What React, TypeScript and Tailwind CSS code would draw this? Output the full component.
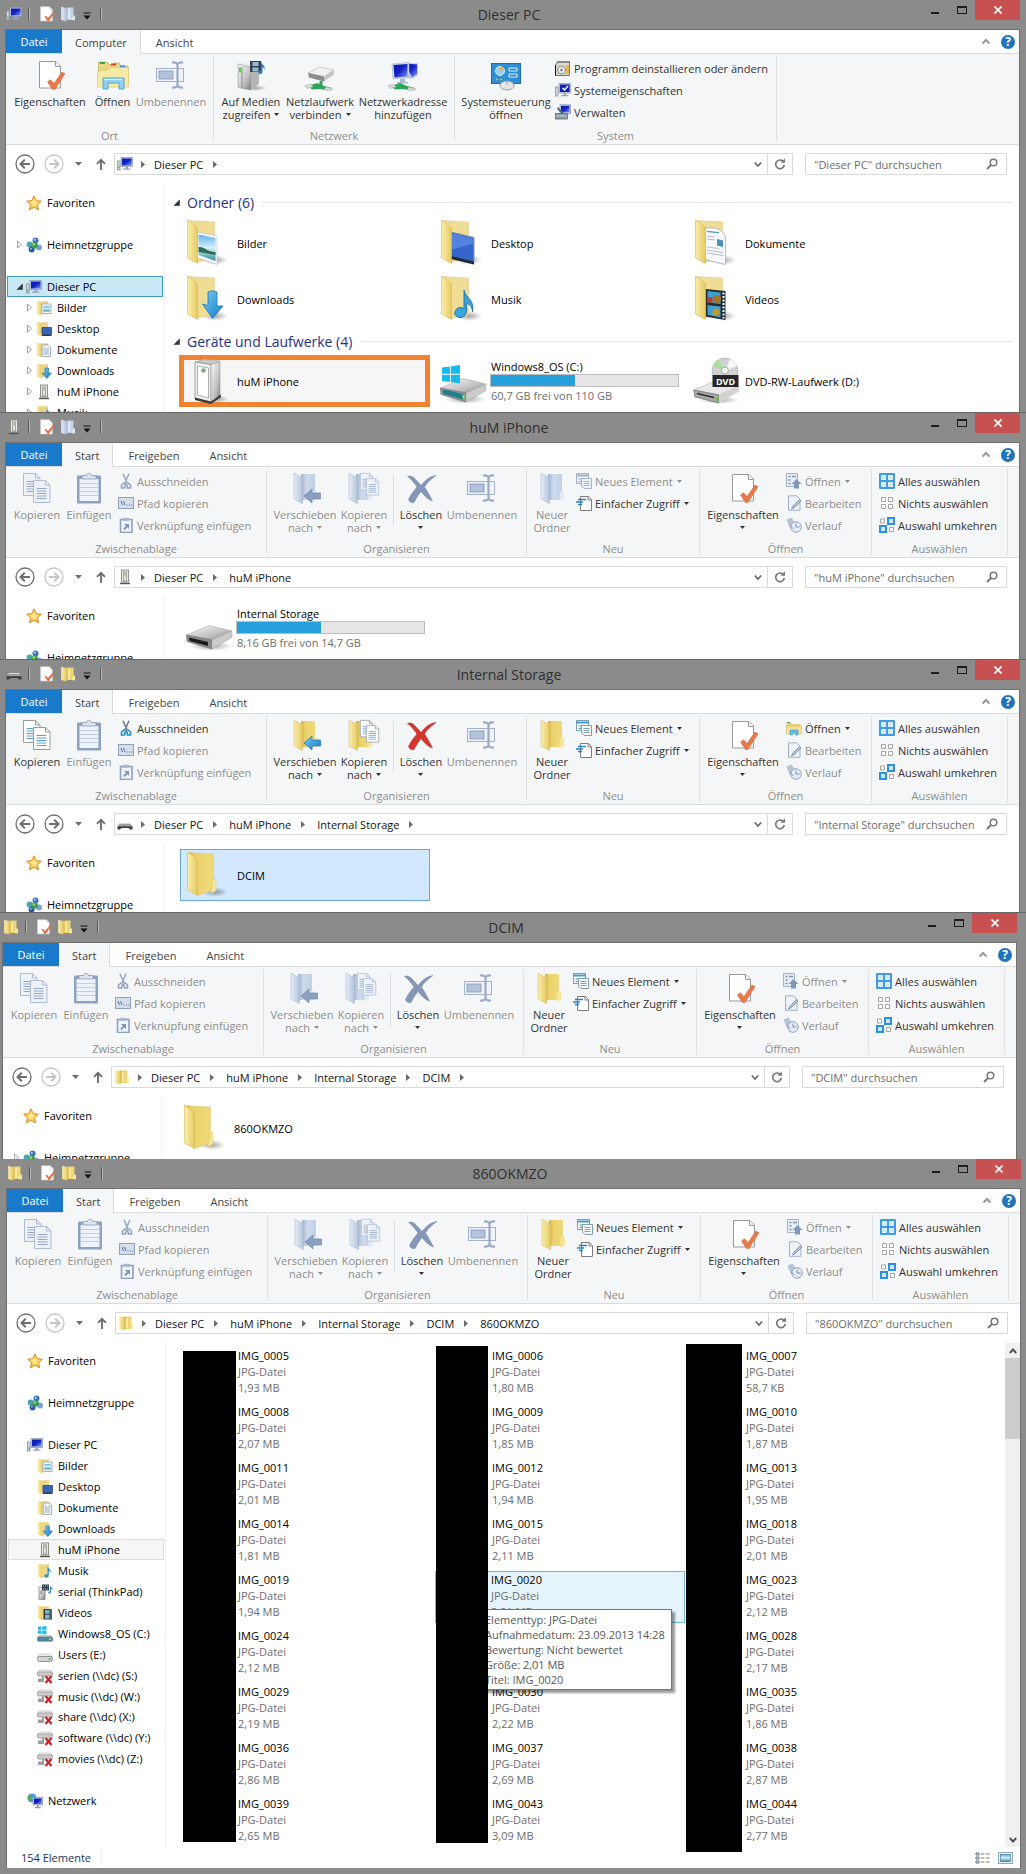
import React from "react";

type IconProps = { on?: boolean };

/* ---------- shared gradients ---------- */

function Gradients() {
  return (
    <svg className="absolute h-0 w-0" aria-hidden="true">
      <defs>
        <linearGradient id="flap" x1="0" x2="1" y1="0" y2="0">
          <stop offset="0" stopColor="#fbefae" />
          <stop offset="1" stopColor="#e6c961" />
        </linearGradient>
        <linearGradient id="panel" x1="0" x2="1" y1="0" y2="0">
          <stop offset="0" stopColor="#d3b142" />
          <stop offset="0.3" stopColor="#ecd26d" />
          <stop offset="1" stopColor="#efd978" />
        </linearGradient>
        <linearGradient id="flapBlue" x1="0" x2="1" y1="0" y2="0">
          <stop offset="0" stopColor="#e6edf7" />
          <stop offset="1" stopColor="#b4c3da" />
        </linearGradient>
        <linearGradient id="panelBlue" x1="0" x2="1" y1="0" y2="0">
          <stop offset="0" stopColor="#9fb2cf" />
          <stop offset="0.4" stopColor="#cfdbec" />
          <stop offset="1" stopColor="#c0cfe4" />
        </linearGradient>
        <linearGradient id="screen" x1="0" x2="1" y1="0" y2="1">
          <stop offset="0" stopColor="#0b1aa8" />
          <stop offset="0.5" stopColor="#1322c4" />
          <stop offset="1" stopColor="#7f9af2" />
        </linearGradient>
        <linearGradient id="metal" x1="0" x2="1" y1="0" y2="1">
          <stop offset="0" stopColor="#fafafa" />
          <stop offset="0.6" stopColor="#c2c2c2" />
          <stop offset="1" stopColor="#7d7d7d" />
        </linearGradient>
        <linearGradient id="sky" x1="0" x2="0" y1="0" y2="1">
          <stop offset="0" stopColor="#5fb2e8" />
          <stop offset="0.5" stopColor="#d8effa" />
          <stop offset="1" stopColor="#2c8f94" />
        </linearGradient>
        <linearGradient id="arrow" x1="0" x2="1" y1="0" y2="1">
          <stop offset="0" stopColor="#7cc8f2" />
          <stop offset="1" stopColor="#0f7fc9" />
        </linearGradient>
        <radialGradient id="starFill">
          <stop offset="0" stopColor="#fff3a0" />
          <stop offset="1" stopColor="#f7b32b" />
        </radialGradient>
        <radialGradient id="shadow">
          <stop offset="0" stopColor="#000" stopOpacity="0.35" />
          <stop offset="1" stopColor="#000" stopOpacity="0" />
        </radialGradient>
      </defs>
    </svg>
  );
}

/* ---------- 16px icons ---------- */

function Svg16({ children }: { children: React.ReactNode }) {
  return (
    <svg viewBox="0 0 16 16" className="h-4 w-4 shrink-0" aria-hidden="true">
      {children}
    </svg>
  );
}

function PcIcon() {
  return (
    <Svg16>
      <rect x="0.5" y="5" width="2.6" height="9" fill="#d7dbe0" stroke="#8a919b" strokeWidth="0.8" />
      <rect x="1.2" y="10.5" width="1.4" height="1.8" fill="#62b04b" />
      <rect x="4" y="1.5" width="11.6" height="9" fill="#c9d2e6" stroke="#8793ad" strokeWidth="0.7" />
      <rect x="5" y="2.5" width="9.6" height="7" fill="url(#screen)" />
      <path d="M8.500 10.500h2.600v2h2.400v1.200H6v-1.200h2.500z" fill="#9aa4b8" />
    </Svg16>
  );
}

function PhoneIcon() {
  return (
    <Svg16>
      <rect x="4.500" y="1" width="7" height="12" fill="#e9eae4" stroke="#8d8f89" />
      <rect x="6.800" y="3" width="2.400" height="9" fill="#fff" stroke="#77796f" strokeWidth="0.800" />
      <rect x="7.500" y="4.200" width="1" height="2.400" fill="#78a567" />
      <path d="M3 14.500h10" stroke="#555" strokeWidth="1.400" />
    </Svg16>
  );
}

function FlatDriveIcon() {
  return (
    <Svg16>
      <path d="M3 7h10l2.500 3.500H.5z" fill="#9e9e9e" />
      <path d="M.5 10.300h15v3.200H13l-1.500-1.400h-7L3 13.500H.5z" fill="#3c3c3c" />
      <path d="M3 7h10l.8 1H2.200z" fill="#d8d8d8" />
    </Svg16>
  );
}

function FolderIcon({ on = true }: IconProps) {
  return (
    <Svg16>
      <path d="M6 1.500h7.500V14H6z" fill={on ? "url(#panel)" : "url(#panelBlue)"} />
      <path d="M13.500 9.500h1.500v4.800h-3V12z" fill={on ? "#f7e79c" : "#dfe8f4"} />
      <path d="M1.200.8l5.300 1.400v13.300L1.200 14z" fill={on ? "url(#flap)" : "url(#flapBlue)"} />
      <path d="M9 3v10" stroke={on ? "#fff6c8" : "#eef3fa"} strokeWidth="1.200" />
    </Svg16>
  );
}

function FolderWith({ kind }: { kind: string }) {
  return (
    <Svg16>
      <path d="M5.500 1.200H12V14H5.500z" fill="#ecd58a" />
      <path d="M.8.600l4.900 1.200v13.400L.8 13.800z" fill="url(#flap)" />
      {kind === "pic" && (
        <g>
          <rect x="6" y="4" width="9" height="9.500" fill="#fff" stroke="#8fa1ad" strokeWidth="0.800" />
          <rect x="7.200" y="6" width="6.600" height="5.500" fill="url(#sky)" />
        </g>
      )}
      {kind === "desk" && (
        <g>
          <path d="M6 6.500h9.500v7H6z" fill="#3466b8" stroke="#2b4679" strokeWidth="0.800" />
          <path d="M6 13.800h9.500v1.200H6z" fill="#27384f" />
        </g>
      )}
      {kind === "doc" && (
        <g>
          <path d="M6.200 3h6.300l2 2v9.500H6.200z" fill="#fff" stroke="#8d99a8" strokeWidth="0.800" />
          <path d="M7.500 6h2.500M7.500 8h5.500M7.500 10h5.500M7.500 12h5.500M11 6h2" stroke="#7c98bb" strokeWidth="0.900" />
        </g>
      )}
      {kind === "down" && <path d="M9 5h3.500v5H15.500l-4.700 5.500L6 10h3z" fill="url(#arrow)" stroke="#1a6fa8" strokeWidth="0.600" />}
      {kind === "music" && (
        <path d="M10.500 3c.3 2.500 4 3 3.200 7.500-.4-2-1.300-2.600-2-2.700v4.700c0 3-5 2.800-4.300.3.400-1.500 2-1.800 3.100-1.300z" fill="#2f93cc" />
      )}
      {kind === "video" && (
        <g>
          <rect x="6.500" y="4" width="8.500" height="10.500" fill="#2f3a42" />
          <rect x="8" y="5" width="4.500" height="3.800" fill="#6fb4dc" />
          <rect x="8" y="9.800" width="4.500" height="3.800" fill="#8fb7c6" />
          <path d="M14 4.500v10" stroke="#dfe4e8" strokeWidth="0.900" strokeDasharray="1 1" />
        </g>
      )}
    </Svg16>
  );
}

function StarIcon() {
  return (
    <Svg16>
      <path d="M8 .8l2.200 4.800 5.200.6-3.900 3.500 1.100 5.200L8 12.300l-4.600 2.600 1.100-5.200L.6 6.200l5.200-.6z" fill="url(#starFill)" stroke="#d98a24" strokeWidth="0.900" />
    </Svg16>
  );
}

function HomegroupIcon() {
  return (
    <Svg16>
      <circle cx="9.500" cy="3.600" r="3" fill="#3a72c4" />
      <circle cx="3.600" cy="7.500" r="3" fill="#48a7b5" />
      <circle cx="13" cy="10.500" r="3" fill="#7ea1d8" />
      <circle cx="5.600" cy="12.600" r="3" fill="#2b57b0" />
      <circle cx="8.600" cy="8.400" r="3.200" fill="#3f9b45" />
      <circle cx="7.800" cy="7.400" r="1.200" fill="#a5dd9a" />
      <circle cx="8.800" cy="2.700" r="1" fill="#c5daf5" />
      <circle cx="4.900" cy="11.700" r="0.900" fill="#a9c3f0" />
    </Svg16>
  );
}

function NetworkIcon() {
  return (
    <Svg16>
      <circle cx="5" cy="5" r="4.600" fill="#4f9bd6" />
      <path d="M2 2.500c2-2 4 0 3 1.500S3 6 4 9C1 8 0 4 2 2.500z" fill="#58a94a" />
      <rect x="6" y="4.500" width="9.600" height="7.500" fill="#c9d2e6" stroke="#8793ad" strokeWidth="0.700" />
      <rect x="7" y="5.500" width="7.600" height="5.500" fill="url(#screen)" />
      <path d="M9.800 12h2v2h2v1.200h-6V14h2z" fill="#8f9ab0" />
    </Svg16>
  );
}

function MediaServerIcon() {
  return (
    <Svg16>
      <rect x="2" y="3" width="6" height="12.500" fill="url(#metal)" stroke="#7a7a7a" strokeWidth="0.700" />
      <rect x="3.500" y="7" width="1.400" height="3" fill="#62b04b" />
      <rect x="5" y="0.500" width="7" height="6" fill="#30424f" />
      <path d="M6 2h5M6 5h5" stroke="#9ad0ee" strokeDasharray="1 1" />
      <path d="M13 1c0 2 3 2 2.500 5.500-.5-1.300-1-1.600-1.500-1.600V8c0 2-3.300 1.800-2.700.2.300-.8 1-1 1.700-.7z" fill="#2f93cc" />
    </Svg16>
  );
}

function SystemDriveIcon() {
  return (
    <Svg16>
      <path d="M1 .8l3.500-.4v3.400H1zM5.200.4L9.500 0v3.800H5.200zM1 4.500h3.500V8L1 7.500zM5.200 4.500h4.300v4L5.200 8z" fill="#1bbdf0" />
      <path d="M2.500 9h11l2 2H.5z" fill="#c4c9cd" />
      <rect x="0.500" y="11" width="15" height="4.200" rx="1" fill="#4c8aa0" stroke="#5e6e75" strokeWidth="0.600" />
      <rect x="12" y="12.400" width="2" height="1.500" fill="#a5e37b" />
    </Svg16>
  );
}

function DriveIcon() {
  return (
    <Svg16>
      <path d="M3 7h10l2.500 3H.5z" fill="#ececec" stroke="#a5a5a5" strokeWidth="0.500" />
      <rect x="0.500" y="9.500" width="15" height="5" rx="2" fill="#d5d5d5" stroke="#7d7d7d" strokeWidth="0.800" />
      <rect x="11.800" y="11.200" width="2" height="1.800" fill="#57a83e" />
    </Svg16>
  );
}

function LostDriveIcon() {
  return (
    <Svg16>
      <path d="M2.500 2h11l2 2.500H.5z" fill="#ededed" stroke="#aaa" strokeWidth="0.500" />
      <rect x="0.500" y="4" width="15" height="4" rx="1.200" fill="#cdcdcd" stroke="#8b8b8b" strokeWidth="0.700" />
      <path d="M6 8v3.500H1M1 13h6" stroke="#9c9c9c" strokeWidth="2" fill="none" />
      <path d="M8.500 8l6 7M14.500 8l-6 7" stroke="#cf1f27" strokeWidth="2.200" />
    </Svg16>
  );
}

function DocCheckIcon() {
  return (
    <Svg16>
      <path d="M1.500.7h8.800l3 3V15H1.500z" fill="#fff" stroke="#c9c9c9" strokeWidth="0.700" />
      <path d="M10.300.7v3h3" fill="#e3e3e3" />
      <path d="M5.500 10.500l1.600-.8 1.800 2.400 4.800-5.600 1.500.7-6 8.500z" fill="#e2704a" />
    </Svg16>
  );
}

/* ---------- ribbon icons ---------- */

function Svg32({ children }: { children: React.ReactNode }) {
  return (
    <svg viewBox="0 0 32 32" className="h-8 w-8 shrink-0" aria-hidden="true">
      {children}
    </svg>
  );
}

function PropertiesIcon() {
  return (
    <Svg32>
      <path d="M5.500 2.500H22l4.500 4.500v22h-21z" fill="#fff" stroke="#9a9a9a" />
      <path d="M21.500 2.500V7.500h5" fill="#f0f0f0" stroke="#9a9a9a" />
      <path d="M13.500 23l3-2.300 3.500 3.800 8-11.500 3 1.800L21 30.500h-2.500z" fill="#e8794b" stroke="#cf5f33" strokeWidth="0.500" />
    </Svg32>
  );
}

function OpenIcon() {
  return (
    <Svg32>
      <path d="M1.500 3h9l1.500 2.500h4L17 4h5l1.500 3H31v20H1.500z" fill="#ecd683" stroke="#c9ae55" strokeWidth="0.700" />
      <rect x="3" y="3" width="5" height="2" fill="#3fa34b" />
      <rect x="14" y="4.500" width="5" height="2" fill="#d6452c" />
      <rect x="23" y="6.500" width="5" height="2" fill="#3c8fd0" />
      <path d="M.5 12l10-1 2-2.500H31.500V28H.5z" fill="#f7e9a6" stroke="#d9c06b" strokeWidth="0.600" />
      <path d="M6 19h21v11h-5v-6H11v6H6z" fill="#8fd0ee" stroke="#4ba3cf" strokeWidth="0.900" />
      <path d="M7.500 20.500h18" stroke="#d9f2fd" strokeWidth="1.200" />
    </Svg32>
  );
}

function RenameIcon() {
  return (
    <Svg32>
      <rect x="1.500" y="9.500" width="27" height="13" fill="#f0f3f9" stroke="#a3b1cb" />
      <rect x="4" y="12" width="14" height="8" fill="#b4c2da" stroke="#8296b8" strokeWidth="0.800" />
      <path d="M17 3.500c2.500-.5 4 0 5.500 1.500 1.500-1.500 3-2 5.500-1.500M17 28.500c2.500.5 4 0 5.500-1.500 1.500 1.500 3 2 5.500 1.500M22.500 4.500v23" stroke="#9aaac6" strokeWidth="2.200" fill="none" />
    </Svg32>
  );
}

function MediaIcon() {
  return (
    <Svg32>
      <ellipse cx="20" cy="29" rx="12" ry="3" fill="url(#shadow)" />
      <path d="M3 5L11 2l13 2-8 4z" fill="#efefef" />
      <path d="M3 5l13 3v23L3 28.500z" fill="url(#metal)" stroke="#8a8a8a" strokeWidth="0.500" />
      <path d="M16 8l8-4v21l-8 6z" fill="#b4b4b4" />
      <path d="M7 8v21" stroke="#8f8f8f" />
      <rect x="4" y="8.500" width="2" height="5" fill="#56c246" />
      <rect x="15" y="2" width="11" height="11" fill="#34444f" />
      <rect x="17.500" y="3" width="6" height="4" fill="#8fbcd6" />
      <rect x="17.500" y="8.500" width="6" height="4" fill="#8fbcd6" />
      <path d="M26 2c.5 4 4.500 3.500 3.500 9-.5-2-1.200-2.500-2-2.700V13c0 3-5 2.600-4 .2.500-1.200 1.500-1.400 2.500-1z" fill="#2488c8" />
    </Svg32>
  );
}

function Cable() {
  return (
    <g>
      <path d="M4 27l9-3 7 3 8 2-4 2.500-8-1.500-8 .5z" fill="#2da558" />
      <path d="M1 26.500l6-1.500 2 3-6 1.500zM22 28l7 2-3 2-6-1.500z" fill="#d9d9d9" stroke="#999" strokeWidth="0.400" />
    </g>
  );
}

function NetDriveIcon() {
  return (
    <Svg32>
      <path d="M4 14l12-6 14 3-10 6.500z" fill="#f1f1f1" stroke="#a5a5a5" strokeWidth="0.500" />
      <path d="M4 14l16 3.500v5L5 18.500z" fill="#8b8b8b" />
      <path d="M20 17.500L30 11v4.500l-10 7z" fill="#c4c4c4" />
      <path d="M17 22v5" stroke="#2da558" strokeWidth="3" />
      <Cable />
    </Svg32>
  );
}

function NetAddressIcon() {
  return (
    <Svg32>
      <path d="M17 3.500l14 1V16l-6 4-8-2z" fill="#bcc7e3" />
      <path d="M18 4.500l12 1V15l-5 3z" fill="url(#screen)" />
      <path d="M5 5l17-1.500v15L6 20z" fill="#d3dcf0" stroke="#9aa7c8" strokeWidth="0.500" />
      <path d="M6.500 6L20.500 5v12.500l-13 1z" fill="url(#screen)" />
      <path d="M13 19.500h5V23h3v1.500H10V23h3z" fill="#b0b8cc" />
      <Cable />
    </Svg32>
  );
}

function ControlPanelIcon() {
  return (
    <Svg32>
      <rect x="1.500" y="4.500" width="29" height="20" fill="#2f8fd3" stroke="#1d6ea9" />
      <circle cx="10" cy="12" r="4.500" fill="#8fd0f4" stroke="#d6effc" />
      <path d="M10 12V7.500A4.500 4.500 0 0 1 14 10z" fill="#f2a33c" />
      <path d="M19 9h8v3h-8zM19 15h8v3h-8z" fill="none" stroke="#d6effc" />
      <circle cx="7" cy="20.500" r="1" fill="#ffb347" />
      <circle cx="11" cy="20.500" r="1" fill="#ffb347" />
      <ellipse cx="17" cy="26.500" rx="7" ry="4.500" fill="#e3e5e8" stroke="#9aa0a8" />
      <path d="M17 22.200v4" stroke="#9aa0a8" />
    </Svg32>
  );
}

function Sheet({ x, y, on }: { x: number; y: number; on?: boolean }) {
  return (
    <g transform={`translate(${x} ${y})`}>
      <path d="M.5.500h12l4.500 4.500v17.500H.5z" fill={on ? "#fff" : "#edf1f8"} stroke={on ? "#9b9b9b" : "#aebbd2"} />
      <path d="M12.500.500V5H17" fill="none" stroke={on ? "#9b9b9b" : "#aebbd2"} />
      <path d="M3.500 8.500h10M3.500 11h10M3.500 13.500h10M3.500 16h10M3.500 18.500h10" stroke={on ? "#5b9fc9" : "#96a7c4"} />
    </g>
  );
}

function CopyIcon({ on }: IconProps) {
  return (
    <Svg32>
      <Sheet x={2} y={1} on={on} />
      <Sheet x={12} y={8} on={on} />
    </Svg32>
  );
}

function PasteIcon() {
  return (
    <Svg32>
      <rect x="4" y="3.500" width="24" height="28" rx="1" fill="#8ea1c0" />
      <rect x="6.500" y="7" width="19" height="22" fill="#eef2f9" />
      <path d="M7 11.500h18M7 15.500h18M7 19.500h18M7 23.500h18" stroke="#c2cfe2" />
      <path d="M9 3.500h4.500c0-3 5-3 5 0H23V7H9z" fill="#dde4f0" stroke="#8496b5" strokeWidth="0.700" />
    </Svg32>
  );
}

function BigFolder({ on }: IconProps) {
  return (
    <g>
      <path d="M12 2h14v26H12z" fill={on ? "url(#panel)" : "url(#panelBlue)"} />
      <path d="M24 19h4v8.500l-5 2z" fill={on ? "#f6e597" : "#e1e9f4"} />
      <path d="M5 1l8.500 5v25.500L5 27z" fill={on ? "url(#flap)" : "url(#flapBlue)"} stroke={on ? "#d3b75a" : "#a3b3cd"} strokeWidth="0.500" />
    </g>
  );
}

function MoveIcon({ on }: IconProps) {
  return (
    <Svg32>
      <BigFolder on={on} />
      <path d="M15 24l8-7v4h8.500v6H23v4z" fill={on ? "url(#arrow)" : "#8b9fbf"} stroke={on ? "#1a78b8" : "#7389ad"} strokeWidth="0.700" />
    </Svg32>
  );
}

function CopyToIcon({ on }: IconProps) {
  return (
    <Svg32>
      <g transform="translate(-4 0)">
        <BigFolder on={on} />
      </g>
      <g transform="translate(12 1) scale(.75)">
        <Sheet x={0} y={0} on={on} />
        <Sheet x={8} y={7} on={on} />
      </g>
    </Svg32>
  );
}

function DeleteIcon({ on }: IconProps) {
  return (
    <Svg32>
      <path
        d="M2.500 4.500c4-1.500 6 0 13.500 9C20 8.500 24 4.500 31 3.500c-5 3.500-9 7-11.500 11.500 3 4.500 5 8 8 14-4-1-8-5-11.500-9.500C13 23 11 27 9 30.500c-2 .8-5-.5-5.500-3C6 22 9 18.500 12 15 9 11 6.500 7 2.500 4.500z"
        fill={on ? "#d6362b" : "#8497b6"}
        stroke={on ? "#b3211c" : "#7488aa"}
        strokeWidth="0.500"
      />
    </Svg32>
  );
}

function NewFolderIcon({ on }: IconProps) {
  return (
    <Svg32>
      <BigFolder on={on} />
    </Svg32>
  );
}

function CutIcon({ on }: IconProps) {
  const c = on ? "#2489c9" : "#93a3be";
  return (
    <Svg16>
      <path d="M5 .8l4.200 9.500M11 .8L6.800 10.300" stroke={on ? "#6f7c88" : "#9dabc3"} strokeWidth="1.600" />
      <path d="M6.500 9.500l-3 2.500v3h3l1-4.500M9.500 9.500l3 2.500v3h-3l-1-4.500" fill="none" stroke={c} strokeWidth="1.600" />
    </Svg16>
  );
}

function PathIcon() {
  return (
    <Svg16>
      <rect x="0.500" y="2.500" width="15" height="11" fill="#d5deec" stroke="#8fa1c0" />
      <path d="M3 6l1.500 4M5.500 6L7 10M8.500 10h1M11 10h1M13.300 10h1" stroke="#5b7299" strokeWidth="1" />
    </Svg16>
  );
}

function ShortcutIcon() {
  return (
    <Svg16>
      <rect x="2.500" y="2.500" width="11.500" height="13" fill="#eef2f9" stroke="#8fa1c0" strokeWidth="1.600" />
      <path d="M5 .8h6v3H5z" fill="#a9b8d0" />
      <path d="M6 7h5v5l-1.700-1.700-2.600 2.700-1.400-1.400L8 9z" fill="#7f93b5" />
    </Svg16>
  );
}

function NewItemIcon({ on }: IconProps) {
  const c = on ? "#7f9db5" : "#a4b3cc";
  return (
    <Svg16>
      <rect x="0.500" y="0.500" width="12" height="10" fill={on ? "#fff" : "#e8edf6"} stroke={c} />
      <path d="M.5 2.500h12" stroke={on ? "#3f9ad0" : c} strokeWidth="2" />
      <path d="M2.500 6H6M2.500 8.500H6" stroke={on ? "#3f9ad0" : c} />
      <path d="M5.500 5.500h10v10H8l-2.500-2.500z" fill={on ? "#fdfdfd" : "#eef2f9"} stroke={c} />
      <path d="M7.500 8.500h6M7.500 10.500h6M7.500 12.500h6" stroke={c} />
    </Svg16>
  );
}

function EasyAccessIcon() {
  return (
    <Svg16>
      <path d="M4.500 1.500h8l3 3v11h-11z" fill="#fff" stroke="#7d7d7d" />
      <path d="M12 1.500V5h3.500" fill="none" stroke="#7d7d7d" />
      <path d="M2 4.500h8M0 7h7M2 9.500h4" stroke="#2b7fc0" strokeWidth="1.400" />
    </Svg16>
  );
}

function OpenSmallIcon({ on }: IconProps) {
  return on ? (
    <Svg16>
      <path d="M.5 2.500h5l1 1.500h8v4H.5z" fill="#e8cf74" />
      <path d="M1 2.500h3" stroke="#3fa34b" />
      <path d="M.5 6h15v8H.5z" fill="#f5e39a" stroke="#cfb45a" strokeWidth="0.600" />
      <path d="M4 10h8v5h-2.500v-2.500h-3V15H4z" fill="#6cc0e8" stroke="#3b97c8" strokeWidth="0.600" />
    </Svg16>
  ) : (
    <Svg16>
      <path d="M.5.500h11v13H.5z" fill="#e9eef6" stroke="#a3b2cb" />
      <path d="M2.500 3.500h2M2.500 7h2M2.500 10.500h2M6 3.500h4" stroke="#7f93b5" strokeWidth="1.600" />
      <path d="M10.500 6l5 5H13v4.500H8V11H5.500z" fill="#8297ba" />
    </Svg16>
  );
}

function EditIcon() {
  return (
    <Svg16>
      <path d="M2.500.800h8l3.500 3.500v11H2.500z" fill="#eef2f9" stroke="#9fafc9" />
      <path d="M13.500 4.500L7 11l-1.500 3 3-1.500L15 6z" fill="#b7c4da" stroke="#7389ad" strokeWidth="0.800" />
    </Svg16>
  );
}

function HistoryIcon() {
  return (
    <Svg16>
      <path d="M.5 2.500l5-2 4 6-6 4z" fill="#b5c2d8" />
      <circle cx="10" cy="10" r="5.300" fill="#e5ebf4" stroke="#92a4c2" />
      <path d="M10 6.500V10h3.500M4.500 9l3 3" stroke="#7f93b5" fill="none" />
    </Svg16>
  );
}

function SelectAllIcon() {
  return (
    <Svg16>
      <rect width="16" height="16" rx="1" fill="#3f9ce4" />
      <path d="M2.500 2.500h4v4h-4zM9.500 2.500h4v4h-4zM2.500 9.500h4v4h-4zM9.500 9.500h4v4h-4z" fill="#cbe8fd" stroke="#e8f5ff" />
    </Svg16>
  );
}

function SelectNoneIcon() {
  return (
    <Svg16>
      <path d="M2.500 2.500h4v4h-4zM9.500 2.500h4v4h-4zM2.500 9.500h4v4h-4zM9.500 9.500h4v4h-4z" fill="#fff" stroke="#a3a3a3" />
    </Svg16>
  );
}

function InvertIcon() {
  return (
    <Svg16>
      <path d="M1.500 2h4v4h-4zM10.500 10.500h4v4h-4z" fill="#fff" stroke="#a3a3a3" />
      <path d="M9 1h6v6H9zM1 9h6v6H1z" fill="#cbe8fd" stroke="#2e8fdc" strokeWidth="2" />
    </Svg16>
  );
}

function UninstallIcon() {
  return (
    <Svg16>
      <path d="M2.500 1.500h12v14h-14v-10z" fill="#d9d8cf" stroke="#76766f" />
      <path d="M2 2h13" stroke="#8c8c86" strokeWidth="2" />
      <path d="M11 5h3v9h-3z" fill="#e4b850" />
      <circle cx="6.500" cy="10" r="4" fill="#e8e8e8" stroke="#8a8a8a" />
      <circle cx="6.500" cy="10" r="1.200" fill="#777" />
      <path d="M.5 5v10.500" stroke="#111" />
    </Svg16>
  );
}

function SystemPropsIcon() {
  return (
    <Svg16>
      <rect x="0.500" y="5" width="2.500" height="9" fill="#d7dbe0" stroke="#8a919b" strokeWidth="0.800" />
      <rect x="4" y="1.500" width="11.600" height="9.500" fill="#c9d2e6" stroke="#8793ad" strokeWidth="0.700" />
      <rect x="5" y="2.500" width="9.600" height="7.500" fill="#1322b4" />
      <path d="M7.500 6l2 2L13 4" stroke="#fff" strokeWidth="1.400" fill="none" />
      <path d="M8.500 11h2.600v2h2.400v1.200H6V13h2.500z" fill="#9aa4b8" />
    </Svg16>
  );
}

function ManageIcon() {
  return (
    <Svg16>
      <rect x="5" y="0.800" width="10.500" height="9" fill="#c9d2e6" stroke="#8793ad" strokeWidth="0.700" />
      <rect x="6" y="1.800" width="8.500" height="6.500" fill="url(#screen)" />
      <path d="M3 3l6 6-2 1-5-5z" fill="#4f6a86" />
      <rect x="0.500" y="9.500" width="12" height="5.500" fill="#8d9aa5" stroke="#5f6b75" strokeWidth="0.800" />
      <path d="M1.500 12h10" stroke="#dfe5ea" strokeDasharray="2 1" />
    </Svg16>
  );
}

/* ---------- content tile icons ---------- */

function Svg48({ children }: { children: React.ReactNode }) {
  return (
    <svg viewBox="0 0 48 48" className="h-12 w-12 shrink-0" aria-hidden="true">
      {children}
    </svg>
  );
}

function TileFolder({ kind }: { kind?: string }) {
  return (
    <Svg48>
      <ellipse cx="30" cy="41" rx="13" ry="5" fill="url(#shadow)" />
      {kind ? (
        <path d="M3 1.500l26.500 1.500V40L12 43z" fill="#efdc95" stroke="#dcc67a" strokeWidth="0.500" />
      ) : (
        <g>
          <path d="M3 1.500L28.500 3v36l-16 5.500z" fill="url(#panel)" stroke="#dcc67a" strokeWidth="0.500" />
          <path d="M28 29l3-1.500V40l-5 2.500z" fill="#f6e799" stroke="#dfc66c" strokeWidth="0.500" />
        </g>
      )}
      {kind === "pic" && (
        <g>
          <path d="M12 13l20 4v28.500l-20-7z" fill="#f6f9fb" stroke="#b4c2cc" strokeWidth="0.600" />
          <path d="M13.500 15.500l17 3.500v23l-17-6z" fill="url(#sky)" />
          <path d="M13.500 28c5-1 9 5 17 5v3c-6-1-11-2-17-3z" fill="#2f6d55" />
        </g>
      )}
      {kind === "desk" && (
        <g>
          <path d="M12 13l23 5.500v25l-23-5.500z" fill="#3566cc" stroke="#8a98ad" />
          <path d="M13 14.500l21 5v5l-21 6z" fill="#5584e0" />
          <path d="M12 37l23 5.500v3L12 40z" fill="#1e2836" />
        </g>
      )}
      {kind === "doc" && (
        <g>
          <path d="M12 9c10-1 18 1 20.500 9v27.500l-20.500-5z" fill="#f7f8fc" stroke="#a9adc0" strokeWidth="0.800" />
          <path d="M14 12.500l12 1.500M14 17l8 1M14 20l8 1M14 31l16 2.500M14 34l16 2.500M14 28l12 1.500" stroke="#b7bccd" />
          <path d="M14 12.500l12 1" stroke="#3f9b9b" />
          <path d="M24 20l6 1.500V28l-6-1.500z" fill="#4b90b5" />
        </g>
      )}
      {kind === "down" && (
        <path d="M23 17c2-1.500 7-1.500 9 0v14h6L27.500 43.500 17.500 29l5.500 1.500z" fill="url(#arrow)" stroke="#1f79b6" strokeWidth="0.800" />
      )}
      {kind === "music" && (
        <path d="M25 15c1 8 11 9 8.500 22-.5-6-3-8-6-8.500V36c0 9-13 8-11.500 1 1-4.500 6-5.500 9-3.500z" fill="#3aa4de" stroke="#1b71ab" strokeWidth="0.900" />
      )}
      {kind === "video" && (
        <g>
          <path d="M12.500 14l20 2v29l-20-3.500z" fill="#222a2e" />
          <path d="M14.500 16l13 1.500v11.500l-13-1.500zM14.500 30l13 1.500v11l-13-2.500z" fill="#3f9fd0" />
          <path d="M14.500 22l5 .5v5.500l-5-.5z" fill="#b2412f" />
          <circle cx="24" cy="24" r="4" fill="#a87425" />
          <circle cx="23" cy="37" r="3.500" fill="#c79a2c" />
          <path d="M30.500 17.500v26" stroke="#fff" strokeWidth="2" strokeDasharray="2 1.500" />
        </g>
      )}
      <path d="M2.500 1l10 7.500v36L2.500 39z" fill="url(#flap)" stroke="#d4b95c" strokeWidth="0.600" />
    </Svg48>
  );
}

function TowerIcon() {
  return (
    <Svg48>
      <ellipse cx="32" cy="42" rx="12" ry="4" fill="url(#shadow)" />
      <path d="M10 5l9-3 16 2-9 3.500z" fill="#c9c9c9" stroke="#9a9a9a" strokeWidth="0.500" />
      <path d="M10 5l16 2.500V46L10 42z" fill="#f0f0f0" stroke="#8d8d8d" strokeWidth="0.800" />
      <path d="M26 7.500L35 4.500V39l-9 7z" fill="url(#metal)" stroke="#8d8d8d" strokeWidth="0.500" />
      <path d="M12.500 9l11 2v30l-11-3z" fill="#fff" stroke="#9d9d9d" strokeWidth="0.800" />
      <circle cx="18.500" cy="13.500" r="1.800" fill="#8fb07c" stroke="#5f6d58" strokeWidth="0.600" />
      <path d="M10 40.500l16 4L36 37.500v2.500L26 47l-16-4z" fill="#3a3a3a" />
    </Svg48>
  );
}

function DriveTileIcon({ windows }: { windows?: boolean }) {
  return (
    <Svg48>
      <ellipse cx="26" cy="42" rx="21" ry="5" fill="url(#shadow)" />
      <path d="M1.500 31L24 21.500 47 27 27 36z" fill="url(#metal)" stroke="#a0a0a0" strokeWidth="0.500" />
      <path d="M1.500 31L27 36v9L2 37.500z" fill={windows ? "#8c9698" : "#8a8a8a"} stroke="#777" strokeWidth="0.700" />
      <path d="M27 36l20-9v6.500L27 45z" fill="#cbcbcb" stroke="#999" strokeWidth="0.400" />
      {windows ? (
        <g>
          <path d="M3.500 33c8 0 13 2.500 21 4.500v5L4.500 37z" fill="#1f7f8c" />
          <path d="M23.500 38l2 .5v3.500l-2-.5z" fill="#8df05e" />
          <path d="M3 10.500l8-1v7.200H3zM12 9.300L21 8v8.700h-9zM3 17.700h8v7.200l-8-1zM12 17.700h9v8.800L12 25z" fill="#16b9ee" />
        </g>
      ) : (
        <path d="M4 33.500l19 4.500v4L4.500 37z" fill="#1b1b1b" />
      )}
    </Svg48>
  );
}

function DvdIcon() {
  return (
    <Svg48>
      <ellipse cx="26" cy="43" rx="20" ry="4" fill="url(#shadow)" />
      <path d="M.8 33L22 24l24 5-20 9z" fill="#e8e8e8" stroke="#a0a0a0" strokeWidth="0.500" />
      <path d="M.8 33L26 38v8L2 40z" fill="#a8a8a8" stroke="#6b6b6b" strokeWidth="0.700" />
      <path d="M26 38l20-9v5.500L26 46z" fill="#d2d2d2" />
      <path d="M4 36.500l17 4" stroke="#2c2c2c" strokeWidth="1.600" />
      <path d="M23 40.500l2.500.5v3l-2.500-.5z" fill="#53c23a" />
      <circle cx="32" cy="14" r="13" fill="#d0d1d3" stroke="#a6a6a6" strokeWidth="0.600" />
      <path d="M32 14L20 9a13 13 0 0 1 6-6z" fill="#a9df9a" />
      <path d="M32 14l5-12a13 13 0 0 1 7 7z" fill="#f7f7f7" />
      <circle cx="32" cy="13.500" r="3.500" fill="#f4f4f4" stroke="#a9a9a9" />
      <rect x="19.500" y="18" width="26" height="12" fill="#262626" />
      <text x="32.500" y="28" textAnchor="middle" fontSize="9" fontWeight="700" fill="#fff" fontFamily="Open Sans, sans-serif">
        DVD
      </text>
    </Svg48>
  );
}

/* ---------- ribbon building blocks ---------- */

function DownCaret({ className = "" }: { className?: string }) {
  return (
    <svg viewBox="0 0 5 3" className={"inline-block h-[3px] w-[5px] align-middle " + className} aria-hidden="true">
      <path d="M0 0h5L2.500 3z" fill="currentColor" />
    </svg>
  );
}

function BigButton({
  icon,
  lines,
  caret,
  on = false,
  width,
}: {
  icon: React.ReactNode;
  lines: string[];
  caret?: boolean;
  on?: boolean;
  width: string;
}) {
  const last = lines.length - 1;
  return (
    <button
      type="button"
      disabled={!on}
      className={`flex flex-col items-center gap-1 pt-[2px] leading-[13px] whitespace-nowrap ${width} ${on ? "text-[#333]" : "text-[#8e8e8e]"}`}
    >
      {icon}
      <span className="flex flex-col items-center">
        {lines.map((line, i) => (
          <span key={i} className="flex min-h-[13px] items-center">
            {line}
            {caret && i === last && <DownCaret className={line ? "ml-1" : ""} />}
          </span>
        ))}
      </span>
    </button>
  );
}

function SmallButton({ icon, label, caret, on = false }: { icon: React.ReactNode; label: string; caret?: boolean; on?: boolean }) {
  return (
    <button type="button" disabled={!on} className={`flex h-[22px] items-center gap-[3px] whitespace-nowrap ${on ? "text-[#333]" : "text-[#8e8e8e]"}`}>
      {icon}
      <span>{label}</span>
      {caret && <DownCaret className="ml-px" />}
    </button>
  );
}

function Group({ label, width, children }: { label: string; width: string; children: React.ReactNode }) {
  return (
    <section aria-label={label} className={`my-[2px] flex shrink-0 flex-col justify-between border-r border-[#e0e2e4] pt-px ${width}`}>
      <div className="flex pl-1">{children}</div>
      <div className="text-center leading-3 text-[#8e8e8e]">{label}</div>
    </section>
  );
}

function ComputerRibbon() {
  return (
    <>
      <Group label="Ort" width="w-[208px]">
        <BigButton on width="w-[80px]" icon={<PropertiesIcon />} lines={["Eigenschaften"]} />
        <BigButton on width="w-[45px]" icon={<OpenIcon />} lines={["Öffnen"]} />
        <BigButton width="w-[72px]" icon={<RenameIcon />} lines={["Umbenennen"]} />
      </Group>
      <Group label="Netzwerk" width="w-[241px]">
        <BigButton on caret width="w-[66px]" icon={<MediaIcon />} lines={["Auf Medien", "zugreifen"]} />
        <BigButton on caret width="w-[72px]" icon={<NetDriveIcon />} lines={["Netzlaufwerk", "verbinden"]} />
        <BigButton on width="w-[94px]" icon={<NetAddressIcon />} lines={["Netzwerkadresse", "hinzufügen"]} />
      </Group>
      <Group label="System" width="w-[322px]">
        <BigButton on width="w-[94px]" icon={<ControlPanelIcon />} lines={["Systemsteuerung", "öffnen"]} />
        <div className="ml-[2px]">
          <SmallButton on icon={<UninstallIcon />} label="Programm deinstallieren oder ändern" />
          <SmallButton on icon={<SystemPropsIcon />} label="Systemeigenschaften" />
          <SmallButton on icon={<ManageIcon />} label="Verwalten" />
        </div>
      </Group>
    </>
  );
}

function StartRibbon({ selected, canCreate }: { selected?: boolean; canCreate?: boolean }) {
  return (
    <>
      <Group label="Zwischenablage" width="w-[261px]">
        <BigButton on={selected} width="w-[54px]" icon={<CopyIcon on={selected} />} lines={["Kopieren"]} />
        <BigButton width="w-[50px]" icon={<PasteIcon />} lines={["Einfügen"]} />
        <div className="ml-1">
          <SmallButton on={selected} icon={<CutIcon on={selected} />} label="Ausschneiden" />
          <SmallButton icon={<PathIcon />} label="Pfad kopieren" />
          <SmallButton icon={<ShortcutIcon />} label="Verknüpfung einfügen" />
        </div>
      </Group>
      <Group label="Organisieren" width="w-[260px]">
        <BigButton on={selected} caret width="w-[68px]" icon={<MoveIcon on={selected} />} lines={["Verschieben", "nach"]} />
        <BigButton on={selected} caret width="w-[50px]" icon={<CopyToIcon on={selected} />} lines={["Kopieren", "nach"]} />
        <div className="mx-1 mt-1 mb-2 w-px bg-[#dfe2e5]" />
        <BigButton on caret width="w-[46px]" icon={<DeleteIcon on={selected} />} lines={["Löschen", ""]} />
        <BigButton width="w-[76px]" icon={<RenameIcon />} lines={["Umbenennen"]} />
      </Group>
      <Group label="Neu" width="w-[173px]">
        <BigButton on={canCreate} width="w-[42px]" icon={<NewFolderIcon on={canCreate} />} lines={["Neuer", "Ordner"]} />
        <div className="ml-[3px]">
          <SmallButton on={canCreate} caret icon={<NewItemIcon on={canCreate} />} label="Neues Element" />
          <SmallButton on caret icon={<EasyAccessIcon />} label="Einfacher Zugriff" />
        </div>
      </Group>
      <Group label="Öffnen" width="w-[172px]">
        <BigButton on caret width="w-[78px]" icon={<PropertiesIcon />} lines={["Eigenschaften", ""]} />
        <div className="ml-1">
          <SmallButton on={selected} caret icon={<OpenSmallIcon on={selected} />} label="Öffnen" />
          <SmallButton icon={<EditIcon />} label="Bearbeiten" />
          <SmallButton icon={<HistoryIcon />} label="Verlauf" />
        </div>
      </Group>
      <Group label="Auswählen" width="w-[136px]">
        <div className="ml-[3px]">
          <SmallButton on icon={<SelectAllIcon />} label="Alles auswählen" />
          <SmallButton on icon={<SelectNoneIcon />} label="Nichts auswählen" />
          <SmallButton on icon={<InvertIcon />} label="Auswahl umkehren" />
        </div>
      </Group>
    </>
  );
}

/* ---------- window chrome ---------- */

function TitleBar({ title, icon, yellow }: { title: string; icon: React.ReactNode; yellow?: boolean }) {
  return (
    <header className="flex h-[29px] items-start">
      <div className="flex h-7 flex-1 items-center">
        {icon}
        <span className="ml-[6px] h-3 w-[2px] border-l border-[#555] bg-[#b5b5b5]" />
        <button type="button" aria-label="Eigenschaften" className="ml-[9px]">
          <DocCheckIcon />
        </button>
        <button type="button" aria-label="Neuer Ordner" className="ml-[5px]">
          <FolderIcon on={!!yellow} />
        </button>
        <button type="button" aria-label="Symbolleiste anpassen" className="ml-[7px]">
          <svg viewBox="0 0 8 8" className="mt-1 h-2 w-2" aria-hidden="true">
            <path d="M.5 1h7" stroke="#111" />
            <path d="M.5 3.500h7L4 7.500z" fill="#111" />
          </svg>
        </button>
        <span className="ml-[9px] h-3 w-[2px] border-l border-[#555] bg-[#b5b5b5]" />
      </div>
      <h1 className="pt-[5px] pr-2 text-[14px] leading-5 text-[#303030]">{title}</h1>
      <div className="flex flex-1 justify-end">
        <button type="button" aria-label="Minimieren" className="flex h-5 w-[26px] items-center justify-center pt-[5px]">
          <span className="h-[2px] w-2 bg-[#1c1c1c]" />
        </button>
        <button type="button" aria-label="Maximieren" className="flex h-5 w-[27px] items-center justify-center">
          <span className="h-2 w-[10px] border border-t-2 border-[#1c1c1c]" />
        </button>
        <button type="button" aria-label="Schließen" className="flex h-5 w-[45px] items-center justify-center bg-[#c75050]">
          <svg viewBox="0 0 8 8" className="h-2 w-2" aria-hidden="true">
            <path d="M.5.500l7 7M7.500.500l-7 7" stroke="#fff" strokeWidth="1.700" />
          </svg>
        </button>
      </div>
    </header>
  );
}

function Tabs({ items }: { items: string[] }) {
  return (
    <div className="flex h-6 border-b border-[#dadbdc] text-[#444]">
      <button type="button" className="h-[23px] w-14 bg-[#1979ca] text-white">
        Datei
      </button>
      {items.map((t, i) =>
        i === 0 ? (
          <button key={t} type="button" className="h-6 border-r border-[#dadbdc] bg-[#f5f6f7] px-[13px]">
            {t}
          </button>
        ) : (
          <button key={t} type="button" className="h-6 px-[15px]">
            {t}
          </button>
        ),
      )}
      <div className="ml-auto flex items-center gap-[10px] pr-1">
        <button type="button" aria-label="Menüband minimieren">
          <svg viewBox="0 0 10 7" className="h-[7px] w-[10px]" aria-hidden="true">
            <path d="M1.500 5.500L5 2l3.500 3.500" fill="none" stroke="#9a9a9a" strokeWidth="2" />
          </svg>
        </button>
        <button type="button" aria-label="Hilfe" className="flex h-[14px] w-[14px] items-center justify-center rounded-full bg-[#1e74bd] text-[12px] leading-none font-bold text-white">
          ?
        </button>
      </div>
    </div>
  );
}

function NavArrow({ on, flip }: { on: boolean; flip?: boolean }) {
  const c = on ? "#6e6e6e" : "#c6c6c6";
  return (
    <button type="button" disabled={!on} aria-label={flip ? "Vorwärts" : "Zurück"}>
      <svg viewBox="0 0 20 20" className={flip ? "h-5 w-5 -scale-x-100" : "h-5 w-5"} aria-hidden="true">
        <circle cx="10" cy="10" r="9" fill="#fff" stroke={c} strokeWidth="1.300" />
        <path d="M15 10H6M9.800 5.800L5.500 10l4.300 4.200" fill="none" stroke={c} strokeWidth="2" />
      </svg>
    </button>
  );
}

function Chevron({ margin = "mx-[10px]" }: { margin?: string }) {
  return (
    <svg viewBox="0 0 4 7" className={`h-[7px] w-1 shrink-0 ${margin}`} aria-hidden="true">
      <path d="M0 0l4 3.500L0 7z" fill="#6a6a6a" />
    </svg>
  );
}

function AddressBar({ icon, crumbs, open, search, forward = false }: { icon: React.ReactNode; crumbs: string[]; open?: boolean; search: string; forward?: boolean }) {
  return (
    <div className="flex h-[39px] items-center pr-3 pb-px pl-[9px]">
      <NavArrow on />
      <span className="w-[9px]" />
      <NavArrow on={forward} flip />
      <button type="button" aria-label="Verlauf" className="ml-[11px] text-[#6e6e6e]">
        <svg viewBox="0 0 7 4" className="h-1 w-[7px]" aria-hidden="true">
          <path d="M0 0h7L3.500 4z" fill="currentColor" />
        </svg>
      </button>
      <button type="button" aria-label="Nach oben" className="ml-[14px]">
        <svg viewBox="0 0 10 12" className="h-3 w-[10px]" aria-hidden="true">
          <path d="M5 12V2M1 5.800l4-4 4 4" fill="none" stroke="#6e6e6e" strokeWidth="1.900" />
        </svg>
      </button>
      <div className="ml-2 flex h-[22px] min-w-0 flex-1 items-center border border-[#d9d9d9] pl-[2px] text-[#111]">
        {icon}
        {crumbs.map((c, i) => (
          <React.Fragment key={c}>
            <Chevron margin={i === 0 ? "mr-[9px] ml-2" : "mr-3 ml-[10px]"} />
            <button type="button" className="whitespace-nowrap">
              {c}
            </button>
          </React.Fragment>
        ))}
        {open && <Chevron />}
        <button type="button" aria-label="Vorherige Orte" className="ml-auto px-[5px]">
          <svg viewBox="0 0 8 7" className="h-[7px] w-2" aria-hidden="true">
            <path d="M.8 1.500L4 5l3.200-3.500" fill="none" stroke="#6a6a6a" strokeWidth="1.800" />
          </svg>
        </button>
        <button type="button" aria-label="Aktualisieren" className="flex h-full w-[25px] items-center justify-center border-l border-[#d9d9d9]">
          <svg viewBox="0 0 12 12" className="h-3 w-3" aria-hidden="true">
            <path d="M9.800 4.200A4.300 4.300 0 1 0 10.300 7" fill="none" stroke="#7a7a7a" strokeWidth="1.700" />
            <path d="M6.500 4.800H11V.3z" fill="#7a7a7a" />
          </svg>
        </button>
      </div>
      <label className="ml-3 flex h-[22px] w-[202px] items-center border border-[#d9d9d9] px-2">
        <input
          type="search"
          aria-label={`${search} durchsuchen`}
          placeholder={`"${search}" durchsuchen`}
          className="min-w-0 flex-1 bg-transparent placeholder:text-[#6d6d6d] placeholder:opacity-100"
        />
        <svg viewBox="0 0 12 12" className="h-3 w-3" aria-hidden="true">
          <circle cx="7.500" cy="4.500" r="3.300" fill="none" stroke="#777" strokeWidth="1.500" />
          <path d="M5 7L1 11" stroke="#777" strokeWidth="2" />
        </svg>
      </label>
    </div>
  );
}

/* ---------- navigation pane ---------- */

type TreeItem = { label: string; icon: React.ReactNode; level?: number; arrow?: "open" | "closed"; mark?: "active" | "hover"; short?: boolean };

function Expander({ kind }: { kind?: "open" | "closed" }) {
  return (
    <svg viewBox="0 0 8 9" className="mr-1 h-[9px] w-2 shrink-0" aria-hidden="true">
      {kind === "open" && <path d="M6.500 2V7.500H1z" fill="#333" stroke="#222" strokeWidth="0.500" />}
      {kind === "closed" && <path d="M1.500 1l4 3.500-4 3.500z" fill="#fff" stroke="#9a9a9a" strokeWidth="0.900" />}
    </svg>
  );
}

function TreeRow({ item }: { item: TreeItem }) {
  const box =
    item.mark === "active"
      ? "border-[#3c9bc4] bg-[#c9e8f6]"
      : item.mark === "hover"
        ? "border-[#dcdcdc] bg-[#f6f6f6]"
        : "border-transparent";
  return (
    <li className={item.short ? "h-5" : "h-[21px]"}>
      <a href="#" className={`mx-px flex h-full items-center border whitespace-nowrap text-black ${item.level ? "pl-[18px]" : "pl-2"} ${box}`}>
        <Expander kind={item.arrow} />
        <span className="-ml-[2px] flex">{item.icon}</span>
        <span className="ml-[5px]">{item.label}</span>
      </a>
    </li>
  );
}

function Tree({ groups, className = "" }: { groups: TreeItem[][]; className?: string }) {
  return (
    <nav aria-label="Navigationsbereich" className={`flex w-[159px] shrink-0 flex-col gap-[21px] overflow-hidden border-r border-[#f0f0f0] ${className}`}>
      {groups.map((g, i) => (
        <ul key={i}>
          {g.map((it) => (
            <TreeRow key={it.label} item={it} />
          ))}
        </ul>
      ))}
    </nav>
  );
}

const favorites: TreeItem[] = [{ label: "Favoriten", icon: <StarIcon /> }];
const homegroup: TreeItem[] = [{ label: "Heimnetzgruppe", icon: <HomegroupIcon /> }];
const homegroupClosed: TreeItem[] = [{ ...homegroup[0], arrow: "closed" }];

const pcTree: TreeItem[] = [
  { label: "Dieser PC", icon: <PcIcon />, arrow: "open", mark: "active" },
  { label: "Bilder", icon: <FolderWith kind="pic" />, level: 1, arrow: "closed" },
  { label: "Desktop", icon: <FolderWith kind="desk" />, level: 1, arrow: "closed" },
  { label: "Dokumente", icon: <FolderWith kind="doc" />, level: 1, arrow: "closed" },
  { label: "Downloads", icon: <FolderWith kind="down" />, level: 1, arrow: "closed" },
  { label: "huM iPhone", icon: <PhoneIcon />, level: 1, arrow: "closed" },
  { label: "Musik", icon: <FolderWith kind="music" />, level: 1, arrow: "closed" },
];

const fullTree: TreeItem[] = [
  { label: "Dieser PC", icon: <PcIcon /> },
  { label: "Bilder", icon: <FolderWith kind="pic" />, level: 1 },
  { label: "Desktop", icon: <FolderWith kind="desk" />, level: 1 },
  { label: "Dokumente", icon: <FolderWith kind="doc" />, level: 1 },
  { label: "Downloads", icon: <FolderWith kind="down" />, level: 1 },
  { label: "huM iPhone", icon: <PhoneIcon />, level: 1, mark: "hover" },
  { label: "Musik", icon: <FolderWith kind="music" />, level: 1 },
  { label: "serial (ThinkPad)", icon: <MediaServerIcon />, level: 1 },
  { label: "Videos", icon: <FolderWith kind="video" />, level: 1 },
  { label: "Windows8_OS (C:)", icon: <SystemDriveIcon />, level: 1 },
  { label: "Users (E:)", icon: <DriveIcon />, level: 1 },
  { label: "serien (\\\\dc) (S:)", icon: <LostDriveIcon />, level: 1 },
  { label: "music (\\\\dc) (W:)", icon: <LostDriveIcon />, level: 1, short: true },
  { label: "share (\\\\dc) (X:)", icon: <LostDriveIcon />, level: 1 },
  { label: "software (\\\\dc) (Y:)", icon: <LostDriveIcon />, level: 1 },
  { label: "movies (\\\\dc) (Z:)", icon: <LostDriveIcon />, level: 1 },
];

const networkItem: TreeItem[] = [{ label: "Netzwerk", icon: <NetworkIcon /> }];

/* ---------- content ---------- */

function Tile({ icon, label, mark = "", children }: { icon: React.ReactNode; label: string; mark?: string; children?: React.ReactNode }) {
  return (
    <button type="button" className={`flex h-[52px] items-center text-left text-black ${mark || "border border-transparent pl-1"}`}>
      {icon}
      <span className="ml-1 flex min-w-0 flex-1 flex-col">
        <span>{label}</span>
        {children}
      </span>
    </button>
  );
}

function Capacity({ percent, text }: { percent: number; text: string }) {
  return (
    <>
      <span className="-ml-px block h-[13px] w-[189px] border border-[#bcbcbc] bg-[#e6e6e6]">
        <span className="block h-full bg-[#26a0da]" style={{ width: `${percent}%` }} />
      </span>
      <span className="mt-px text-[#6d6d6d]">{text}</span>
    </>
  );
}

function Heading({ children }: { children: React.ReactNode }) {
  return (
    <h2 className="flex h-5 items-center pr-[7px] pl-2 text-[14px] text-[#1e3287]">
      <Expander kind="open" />
      <span className="mr-2 ml-[2px]">{children}</span>
      <span className="h-px flex-1 bg-[#e2e2e2]" />
    </h2>
  );
}

const tileGrid = "grid grid-cols-[repeat(auto-fill,250px)] gap-1 pl-[15px]";

type WindowProps = {
  title: string;
  icon: React.ReactNode;
  yellow?: boolean;
  tabs: string[];
  ribbon: React.ReactNode;
  crumbs: string[];
  open?: boolean;
  forward?: boolean;
  edges?: string;
  line?: boolean;
  children: React.ReactNode;
};

function ExplorerWindow({ title, icon, yellow, tabs, ribbon, crumbs, open, forward, edges = "pl-[5px] pr-[6px]", line = true, children }: WindowProps) {
  return (
    <section aria-label={title} className={`bg-[#8b8b8b] ${edges} ${line ? "border-b border-[#666]" : ""}`}>
      <div className="pl-px">
        <TitleBar title={title} icon={icon} yellow={yellow} />
      </div>
      <div className="border-x border-t border-[#6f6f6f] bg-white">
        <Tabs items={tabs} />
        <div className="flex h-[91px] border-b border-[#dadbdc] bg-[#f5f6f7]">{ribbon}</div>
        <AddressBar icon={icon} crumbs={crumbs} open={open} search={crumbs[crumbs.length - 1]} forward={forward} />
        {children}
      </div>
    </section>
  );
}

const startTabs = ["Start", "Freigeben", "Ansicht"];

type FileEntry = [name: string, size: string];

const columns: { bar: string; files: FileEntry[] }[] = [
  {
    bar: "left-px top-1 w-[53px] h-[491px]",
    files: [
      ["IMG_0005", "1,93 MB"],
      ["IMG_0008", "2,07 MB"],
      ["IMG_0011", "2,01 MB"],
      ["IMG_0014", "1,81 MB"],
      ["IMG_0019", "1,94 MB"],
      ["IMG_0024", "2,12 MB"],
      ["IMG_0029", "2,19 MB"],
      ["IMG_0036", "2,86 MB"],
      ["IMG_0039", "2,65 MB"],
    ],
  },
  {
    bar: "left-0 -top-px w-[52px] h-[497px]",
    files: [
      ["IMG_0006", "1,80 MB"],
      ["IMG_0009", "1,85 MB"],
      ["IMG_0012", "1,94 MB"],
      ["IMG_0015", "2,11 MB"],
      ["IMG_0020", "2,01 MB"],
      ["", ""],
      ["IMG_0030", "2,22 MB"],
      ["IMG_0037", "2,69 MB"],
      ["IMG_0043", "3,09 MB"],
    ],
  },
  {
    bar: "-left-1 -top-[3px] w-14 h-[508px]",
    files: [
      ["IMG_0007", "58,7 KB"],
      ["IMG_0010", "1,87 MB"],
      ["IMG_0013", "1,95 MB"],
      ["IMG_0018", "2,01 MB"],
      ["IMG_0023", "2,12 MB"],
      ["IMG_0028", "2,17 MB"],
      ["IMG_0035", "1,86 MB"],
      ["IMG_0038", "2,87 MB"],
      ["IMG_0044", "2,77 MB"],
    ],
  },
];

function FileColumn({ bar, files, hovered }: { bar: string; files: FileEntry[]; hovered?: string }) {
  return (
    <div className="relative w-[254px] pr-[5px]">
      <ul className="flex flex-col gap-1">
        {files.map(([name, size], i) => (
          <li
            key={i}
            className={`h-[52px] border pl-[55px] leading-4 ${name !== "" && name === hovered ? "-ml-px border-[#70b8d8] bg-[#e5f3fb] pl-14" : "border-transparent"}`}
          >
            {name && (
              <>
                <div className="text-black">{name}</div>
                <div className="text-[#6d6d6d]">JPG-Datei</div>
                <div className="text-[#6d6d6d]">{size}</div>
              </>
            )}
          </li>
        ))}
      </ul>
      {hovered && (
        <div
          role="tooltip"
          className="absolute top-[262px] left-[44px] w-[192px] border border-[#767676] bg-white py-[2px] pl-1 leading-[15px] whitespace-nowrap text-[#575757] shadow-[3px_3px_2px_rgba(0,0,0,0.4)]"
        >
          <p>Elementtyp: JPG-Datei</p>
          <p>Aufnahmedatum: 23.09.2013 14:28</p>
          <p>Bewertung: Nicht bewertet</p>
          <p>Größe: 2,01 MB</p>
          <p>Titel: IMG_0020</p>
        </div>
      )}
      <div className={`absolute bg-black ${bar}`} />
    </div>
  );
}

function Scrollbar() {
  return (
    <div className="ml-auto flex w-[15px] flex-col bg-[#f0f0f0]">
      <button type="button" aria-label="Nach oben blättern" className="flex h-[15px] items-center justify-center">
        <svg viewBox="0 0 8 6" className="h-[6px] w-2" aria-hidden="true">
          <path d="M.8 5L4 1.500 7.200 5" fill="none" stroke="#505050" strokeWidth="1.900" />
        </svg>
      </button>
      <div className="h-[81px] bg-[#cdcdcd]" />
      <button type="button" aria-label="Nach unten blättern" className="mt-auto flex h-[15px] items-center justify-center">
        <svg viewBox="0 0 8 6" className="h-[6px] w-2" aria-hidden="true">
          <path d="M.8 1L4 4.500 7.200 1" fill="none" stroke="#505050" strokeWidth="1.900" />
        </svg>
      </button>
    </div>
  );
}

export default function App() {
  return (
    <div className="min-h-screen overflow-hidden bg-[#8b8b8b] font-['Open_Sans','Noto_Sans',sans-serif] text-[11px] leading-[15px]">
      <Gradients />

      <ExplorerWindow title="Dieser PC" icon={<PcIcon />} tabs={["Computer", "Ansicht"]} ribbon={<ComputerRibbon />} crumbs={["Dieser PC"]} open>
        <div className="flex">
          <Tree className="pt-2 [contain:size]" groups={[favorites, homegroupClosed, pcTree]} />
          <main className="flex-1 pt-2 pb-[5px]">
            <Heading>Ordner (6)</Heading>
            <div className={`${tileGrid} pt-[5px] pb-[6px]`}>
              <Tile icon={<TileFolder kind="pic" />} label="Bilder" />
              <Tile icon={<TileFolder kind="desk" />} label="Desktop" />
              <Tile icon={<TileFolder kind="doc" />} label="Dokumente" />
              <Tile icon={<TileFolder kind="down" />} label="Downloads" />
              <Tile icon={<TileFolder kind="music" />} label="Musik" />
              <Tile icon={<TileFolder kind="video" />} label="Videos" />
            </div>
            <Heading>Geräte und Laufwerke (4)</Heading>
            <div className={`${tileGrid} pt-1`}>
              <Tile mark="-ml-px border-[5px] border-[#f08232] bg-[#f6f6f6] pl-px" icon={<TowerIcon />} label="huM iPhone" />
              <Tile icon={<DriveTileIcon windows />} label="Windows8_OS (C:)">
                <Capacity percent={45} text="60,7 GB frei von 110 GB" />
              </Tile>
              <Tile icon={<DvdIcon />} label="DVD-RW-Laufwerk (D:)" />
            </div>
          </main>
        </div>
      </ExplorerWindow>

      <ExplorerWindow title="huM iPhone" icon={<PhoneIcon />} tabs={startTabs} ribbon={<StartRibbon />} crumbs={["Dieser PC", "huM iPhone"]}>
        <div className="flex">
          <Tree className="pt-2 [contain:size]" groups={[favorites, homegroup]} />
          <main className={`flex-1 pt-[5px] pb-[5px] ${tileGrid}`}>
            <Tile icon={<DriveTileIcon />} label="Internal Storage">
              <Capacity percent={45} text="8,16 GB frei von 14,7 GB" />
            </Tile>
          </main>
        </div>
      </ExplorerWindow>

      <ExplorerWindow
        title="Internal Storage"
        icon={<FlatDriveIcon />}
        yellow
        tabs={startTabs}
        ribbon={<StartRibbon selected canCreate />}
        crumbs={["Dieser PC", "huM iPhone", "Internal Storage"]}
        open
        forward
      >
        <div className="flex">
          <Tree className="pt-2 [contain:size]" groups={[favorites, homegroup]} />
          <main className={`flex-1 pt-[5px] pb-[11px] ${tileGrid}`}>
            <Tile mark="border border-[#66a7d8] bg-[#d1e8ff] pl-1" icon={<TileFolder />} label="DCIM" />
          </main>
        </div>
      </ExplorerWindow>

      <ExplorerWindow
        title="DCIM"
        icon={<FolderIcon />}
        yellow
        tabs={startTabs}
        ribbon={<StartRibbon canCreate />}
        crumbs={["Dieser PC", "huM iPhone", "Internal Storage", "DCIM"]}
        open
        edges="pl-[2px] pr-[9px]"
        line={false}
      >
        <div className="flex">
          <Tree className="pt-2 [contain:size]" groups={[favorites, homegroupClosed]} />
          <main className={`flex-1 pt-[5px] pb-[5px] ${tileGrid}`}>
            <Tile icon={<TileFolder />} label="860OKMZO" />
          </main>
        </div>
      </ExplorerWindow>

      <ExplorerWindow
        title="860OKMZO"
        icon={<FolderIcon />}
        yellow
        tabs={startTabs}
        ribbon={<StartRibbon canCreate />}
        crumbs={["Dieser PC", "huM iPhone", "Internal Storage", "DCIM", "860OKMZO"]}
        edges="pl-[6px] pr-[5px] pb-[6px]"
        line={false}
      >
        <div className="flex">
          <Tree className="pt-[7px]" groups={[favorites, homegroup, fullTree, networkItem]} />
          <main className="flex pt-1 pl-4">
            {columns.map((c, i) => (
              <FileColumn key={i} bar={c.bar} files={c.files} hovered={i === 1 ? "IMG_0020" : undefined} />
            ))}
          </main>
          <Scrollbar />
        </div>
        <footer className="flex h-[21px] items-center pr-[7px] pl-[14px] text-[#1e3358]">
          <span className="border-r border-[#f0f0f0] pr-[10px]">154 Elemente</span>
          <button type="button" aria-label="Details" className="ml-auto">
            <svg viewBox="0 0 15 12" className="h-3 w-[15px]" aria-hidden="true">
              <path d="M1 1h3v2H1zM1 5h3v2H1zM1 9h3v2H1z" fill="none" stroke="#5d6f80" />
              <path d="M6 2h3.500M11 2h3.500M6 6h3.500M11 6h3.500M6 10h3.500M11 10h3.500" stroke="#777" />
            </svg>
          </button>
          <button type="button" aria-label="Große Symbole" className="ml-2">
            <svg viewBox="0 0 15 12" className="h-3 w-[15px]" aria-hidden="true">
              <rect x="0.500" y="0.500" width="14" height="11" fill="#e4f1fa" stroke="#8fa9bb" />
              <rect x="2.500" y="2.500" width="10" height="7" fill="url(#sky)" stroke="#3c6f80" strokeWidth="0.600" />
            </svg>
          </button>
        </footer>
      </ExplorerWindow>
    </div>
  );
}
